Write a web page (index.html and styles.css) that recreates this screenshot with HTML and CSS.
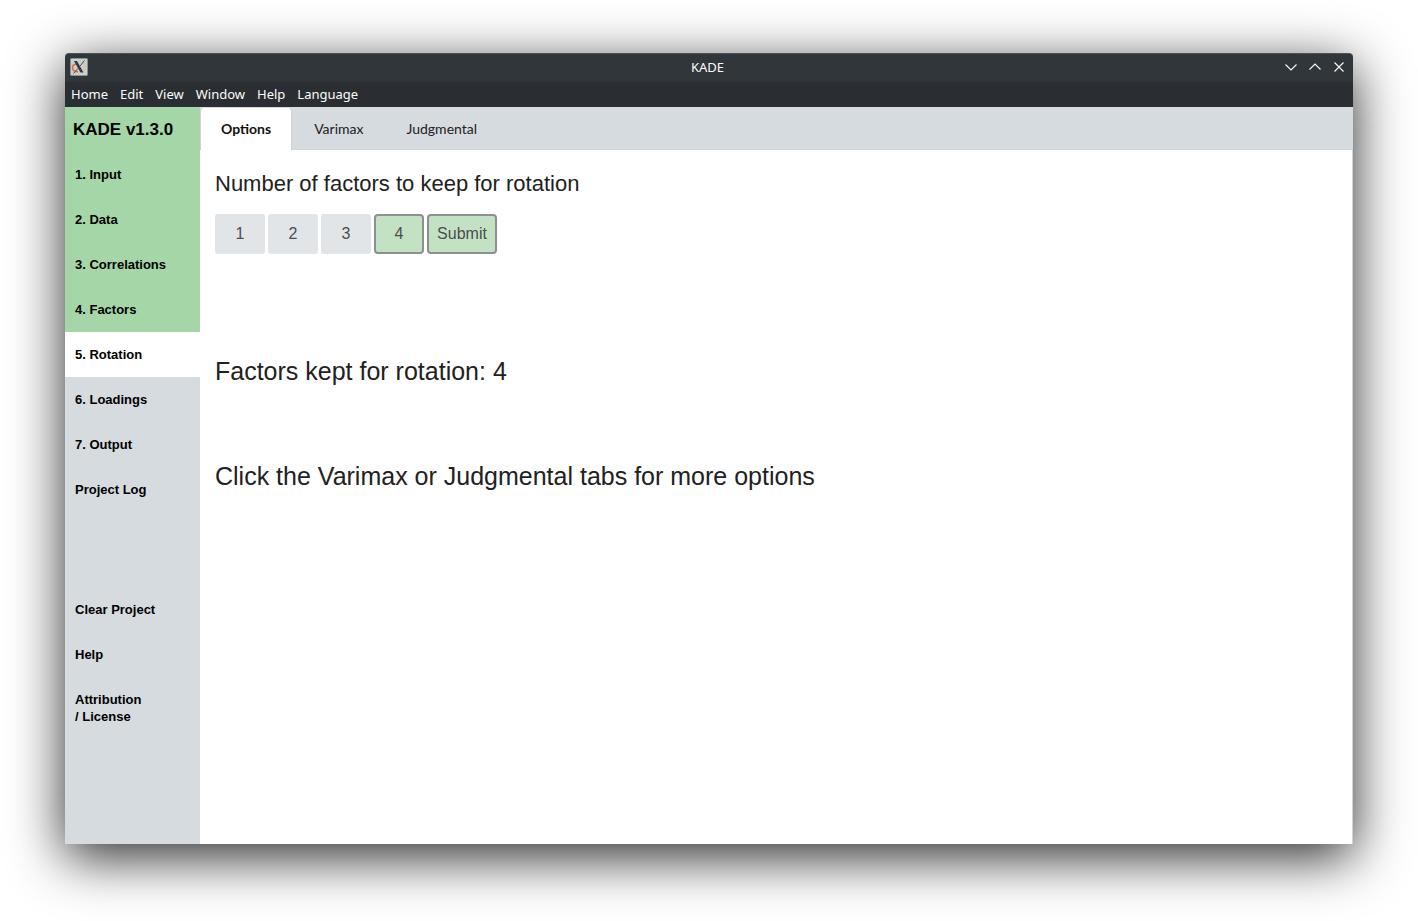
FILE: index.html
```html
<!DOCTYPE html>
<html lang="en">
<head>
<meta charset="utf-8">
<meta name="viewport" content="width=device-width, initial-scale=1">
<title>KADE</title>
<link rel="stylesheet" href="styles.css">
</head>
<body>
<div class="window">
  <header class="titlebar">
    <svg class="app-icon" viewBox="0 0 18 18" aria-hidden="true">
      <rect x="0.5" y="0.5" width="17" height="17" rx="1" fill="#c9ced1" stroke="#8b9093"/>
      <path d="M6 6C3.500 6.500 2.300 8 2.500 10C2.800 12.500 5.500 13.800 8 13.800" fill="none" stroke="#e8663a" stroke-width="1.500"/>
      <path d="M8 13.800C12 14 15.500 12 15.700 9C15.800 7 14 5.500 12 5.200" fill="none" stroke="#e9bd83" stroke-width="1.200"/>
      <path d="M14.500 2.500L9.800 8.300M8 10.400L3.500 15.500" stroke="#4a4f52" stroke-width="1"/>
      <path d="M4 3H7L13.500 14.500H10.500Z" fill="#33383b"/>
    </svg>
    <span class="window-title">KADE</span>
    <div class="window-controls">
      <button class="control" type="button" aria-label="Minimize"><svg viewBox="0 0 12 12"><path d="M0.500 3.500L6 9L11.500 3.500"/></svg></button>
      <button class="control" type="button" aria-label="Maximize"><svg viewBox="0 0 12 12"><path d="M0.500 8.500L6 3L11.500 8.500"/></svg></button>
      <button class="control" type="button" aria-label="Close"><svg viewBox="0 0 12 12"><path d="M1.500 1.500L10.500 10.500M10.500 1.500L1.500 10.500"/></svg></button>
    </div>
  </header>
  <nav class="menubar" aria-label="Menu">
    <button type="button">Home</button>
    <button type="button">Edit</button>
    <button type="button">View</button>
    <button type="button">Window</button>
    <button type="button">Help</button>
    <button type="button">Language</button>
  </nav>
  <div class="app">
    <nav class="sidebar" aria-label="Sections">
      <div class="brand">KADE v1.3.0</div>
      <a class="step done" href="#input">1. Input</a>
      <a class="step done" href="#data">2. Data</a>
      <a class="step done" href="#correlations">3. Correlations</a>
      <a class="step done" href="#factors">4. Factors</a>
      <a class="step current" href="#rotation" aria-current="page">5. Rotation</a>
      <a class="step" href="#loadings">6. Loadings</a>
      <a class="step" href="#output">7. Output</a>
      <a class="step" href="#log">Project Log</a>
      <div class="extras">
        <a class="step" href="#clear">Clear Project</a>
        <a class="step" href="#help">Help</a>
        <a class="step" href="#license">Attribution<br>/ License</a>
      </div>
    </nav>
    <main class="main">
      <div class="tabs" role="tablist">
        <button class="tab active" type="button" role="tab" aria-selected="true">Options</button>
        <button class="tab" type="button" role="tab" aria-selected="false">Varimax</button>
        <button class="tab" type="button" role="tab" aria-selected="false">Judgmental</button>
      </div>
      <section class="panel" role="tabpanel">
        <h1 class="question">Number of factors to keep for rotation</h1>
        <div class="choices">
          <button class="choice" type="button">1</button>
          <button class="choice" type="button">2</button>
          <button class="choice" type="button">3</button>
          <button class="choice selected" type="button">4</button>
          <button class="choice selected submit" type="button">Submit</button>
        </div>
        <p class="status">Factors kept for rotation: 4</p>
        <p class="status hint">Click the Varimax or Judgmental tabs for more options</p>
      </section>
    </main>
  </div>
</div>
</body>
</html>
```
FILE: styles.css
```css
* {
  box-sizing: border-box;
}

body {
  margin: 0;
  min-height: 100vh;
  padding: 53px 65px 77px;
  display: flex;
  background: #fff;
  color: #212121;
  font-family: "Liberation Sans", Arial, sans-serif;
}

button {
  margin: 0;
  padding: 0;
  border: 0;
  background: none;
  color: inherit;
  font: inherit;
}

.window {
  flex: 1;
  display: flex;
  flex-direction: column;
  border-radius: 4px 4px 0 0;
  background: #fff;
  box-shadow: 0 13px 54px rgba(0, 0, 0, 0.84);
}

.titlebar {
  display: grid;
  grid-template-columns: 1fr auto 1fr;
  align-items: center;
  height: 29px;
  padding: 0 8px 2px 5px;
  border-top: 1px solid #4b5358;
  border-radius: 4px 4px 0 0;
  background: #31363b;
  color: #fcfcfc;
  font: 13px/18px "Noto Sans", sans-serif;
}

.app-icon {
  width: 18px;
  height: 18px;
}

.window-controls {
  display: flex;
  justify-content: flex-end;
  gap: 12px;
}

.control {
  display: flex;
}

.control svg {
  width: 12px;
  height: 12px;
  fill: none;
  stroke: #fcfcfc;
  stroke-width: 1.1;
}

.menubar {
  display: flex;
  gap: 12px;
  height: 25px;
  padding: 0 6px 2px;
  background: #2a2e32;
  color: #fcfcfc;
  font: 13px/22px "Noto Sans", sans-serif;
}

.app {
  flex: 1;
  display: flex;
}

.sidebar {
  flex: 0 0 135px;
  background: #d6dbdf;
  color: #000;
  font-weight: bold;
}

.brand {
  height: 45px;
  padding: 0 8px;
  background: #a5d6a7;
  font-size: 17px;
  line-height: 45px;
}

.step {
  display: block;
  min-height: 45px;
  padding: 14px 10px;
  color: inherit;
  font-size: 13px;
  line-height: 17px;
  text-decoration: none;
}

.done {
  background: #a5d6a7;
}

.current {
  background: #fff;
}

.extras {
  margin-top: 75px;
}

.main {
  flex: 1;
  display: flex;
  flex-direction: column;
  min-width: 0;
}

.tabs {
  display: flex;
  gap: 1px;
  height: 43px;
  padding-top: 1px;
  border-bottom: 1px solid #d0d4d8;
  background: #d6dbdf;
  font: 14px/20px Lato, sans-serif;
}

.tab {
  padding: 0 21px;
  color: #212121;
}

.active {
  margin-bottom: -1px;
  border: 1px solid #d0d4d8;
  border-width: 0 1px;
  border-radius: 4px 4px 0 0;
  padding: 0 20px;
  background: #fff;
  color: #111;
  font-weight: bold;
}

.panel {
  flex: 1;
  padding: 20px 15px;
  border-right: 1px solid #d0d4d8;
}

.question {
  margin: 0 0 16px;
  font-size: 22px;
  font-weight: normal;
  line-height: 28px;
}

.choices {
  display: flex;
  gap: 3px;
}

.choice {
  width: 50px;
  height: 40px;
  border-radius: 3px;
  background: #e1e5e8;
  color: #4d4d4d;
  font-size: 16px;
}

.selected {
  border: 2px solid #8f8f8f;
  border-radius: 4px;
  background: #c3e2c4;
}

.submit {
  width: 70px;
}

.status {
  margin: 102px 0 0;
  font-size: 25px;
  line-height: 30px;
}

.hint {
  margin-top: 75px;
}
```
